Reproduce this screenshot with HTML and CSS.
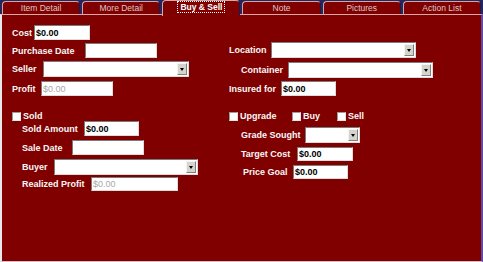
FILE: index.html
```html
<!DOCTYPE html>
<html lang="en">
<head>
  <meta charset="UTF-8" />
  <title>Buy &amp; Sell</title>
  <link rel="stylesheet" href="styles.css">
</head>
<body>
  <div class="window">
    <div class="tabs">
      <div class="tab">Item Detail</div>
      <div class="tab">More Detail</div>
      <div class="tab active"><span>Buy &amp; Sell</span></div>
      <div class="tab">Note</div>
      <div class="tab">Pictures</div>
      <div class="tab">Action List</div>
    </div>

    <div class="panel">
      <div class="col left">
        <div class="row f-cost"><label>Cost</label><input class="txt" value="$0.00"></div>
        <div class="row f-purchase"><label>Purchase Date</label><input class="txt" value=""></div>
        <div class="row f-seller combo-row"><label>Seller</label><div class="combo"><span class="btn"></span></div></div>
        <div class="row f-profit"><label>Profit</label><input class="txt off" value="$0.00" disabled></div>

        <div class="row checks"><div class="check"><span class="box"></span>Sold</div></div>

        <div class="row sub f-amount"><label>Sold Amount</label><input class="txt" value="$0.00"></div>
        <div class="row sub f-saledate"><label>Sale Date</label><input class="txt" value=""></div>
        <div class="row sub f-buyer combo-row"><label>Buyer</label><div class="combo"><span class="btn"></span></div></div>
        <div class="row sub f-realized"><label>Realized Profit</label><input class="txt off" value="$0.00" disabled></div>
      </div>

      <div class="col right">
        <div class="row f-location combo-row"><label>Location</label><div class="combo"><span class="btn"></span></div></div>
        <div class="row f-container combo-row"><label>Container</label><div class="combo"><span class="btn"></span></div></div>
        <div class="row f-insured"><label>Insured for</label><input class="txt" value="$0.00"></div>

        <div class="row checks">
          <div class="check c-upgrade"><span class="box"></span>Upgrade</div>
          <div class="check c-buy"><span class="box"></span>Buy</div>
          <div class="check"><span class="box"></span>Sell</div>
        </div>

        <div class="row f-grade combo-row"><label>Grade Sought</label><div class="combo"><span class="btn"></span></div></div>
        <div class="row f-target"><label>Target Cost</label><input class="txt" value="$0.00"></div>
        <div class="row f-goal"><label>Price Goal</label><input class="txt" value="$0.00"></div>
      </div>
    </div>
  </div>
</body>
</html>
```

FILE: styles.css
```css
body {
  margin: 0;
  background: #800000;
  font-family: "Liberation Sans", Arial, sans-serif;
}

.window {
  width: 483px;
  height: 262px;
  display: flex;
  flex-direction: column;
  background: #26265e;
}

/* tab strip */
.tabs {
  display: grid;
  grid-template-columns: repeat(6, 1fr);
  gap: 2px;
  padding: 0 2px;
  height: 14px;
}

.tab {
  margin-top: 1px;
  height: 13px;
  box-sizing: border-box;
  background: #800000;
  border: 1px solid #d4a8a8;
  border-bottom: none;
  border-right-color: #1c1c50;
  border-radius: 4px 4px 0 0;
  color: #d8c8c8;
  font-size: 8.5px;
  line-height: 12px;
  text-align: center;
  white-space: nowrap;
}

.tab.active {
  position: relative;
  z-index: 1;
  margin-top: 0;
  height: 16px;
  color: #fff;
  font-weight: bold;
  line-height: 13px;
}

.tab.active span {
  outline: 1px dotted #fff;
  padding: 0 2px;
}

/* page body */
.panel {
  flex: 1;
  display: flex;
  background: #800000;
  border-top: 1px solid #d8a8a8;
  border-left: 2px solid #e8e8e8;
  border-right: 2px solid #5c4ca8;
  border-bottom: 1px solid #d0c0d0;
}

.col {
  display: flex;
  flex-direction: column;
  box-sizing: border-box;
}

.col.left {
  width: 227px;
  padding: 10px 0 0 10px;
}

.col.right {
  flex: 1;
  padding-top: 27px;
}

.row {
  display: flex;
  align-items: center;
  height: 15px;
  color: #f8f8f8;
  font-size: 9px;
  font-weight: bold;
}

.row label {
  flex: none;
  white-space: nowrap;
}

.row.sub {
  padding-left: 10px;
}

.combo-row {
  height: 16px;
}

.txt {
  box-sizing: border-box;
  height: 100%;
  margin: 0;
  padding: 0 1px;
  border: 1px solid;
  border-color: #7a7a7a #dcdcdc #dcdcdc #7a7a7a;
  background: #fff;
  color: #000;
  font-family: "Liberation Sans", Arial, sans-serif;
  font-size: 9px;
  font-weight: bold;
}

.txt.off {
  color: #a8a8a8;
  font-weight: normal;
}

.combo {
  box-sizing: border-box;
  height: 100%;
  display: flex;
  justify-content: flex-end;
  padding: 1px;
  background: #fff;
  border: 1px solid;
  border-color: #7a7a7a #dcdcdc #dcdcdc #7a7a7a;
}

.combo .btn {
  width: 10px;
  box-sizing: border-box;
  display: flex;
  align-items: center;
  justify-content: center;
  background: #d4d4cc;
  border: 1px solid;
  border-color: #f4f4f4 #808080 #808080 #f4f4f4;
}

.combo .btn::after {
  content: "";
  border-left: 2px solid transparent;
  border-right: 2px solid transparent;
  border-top: 3px solid #000;
}

.checks {
  height: 10px;
  margin-top: 15px;
}

.check {
  display: flex;
  align-items: center;
  white-space: nowrap;
}

.box {
  width: 9px;
  height: 9px;
  box-sizing: border-box;
  margin-right: 2px;
  background: #fff;
  border: 1px solid;
  border-color: #9a9a9a #e4e4e4 #e4e4e4 #9a9a9a;
}

.c-upgrade { width: 63px; }
.c-buy { width: 45px; }

/* left column fields */
.f-cost label { width: 22px; }
.f-cost .txt { width: 56px; }

.f-purchase { margin-top: 3px; }
.f-purchase label { width: 73px; }
.f-purchase .txt { width: 72px; }

.f-seller { margin-top: 3px; }
.f-seller label { width: 31px; }
.f-seller .combo { width: 146px; }

.f-profit { margin-top: 4px; }
.f-profit label { width: 29px; }
.f-profit .txt { width: 72px; }

.f-amount label { width: 62px; }
.f-amount .txt { width: 55px; }

.f-saledate { margin-top: 4px; }
.f-saledate label { width: 50px; }
.f-saledate .txt { width: 72px; }

.f-buyer { margin-top: 4px; }
.f-buyer label { width: 32px; }
.f-buyer .combo { width: 144px; }

.f-realized { margin-top: 2px; height: 14px; }
.f-realized label { width: 69px; }
.f-realized .txt { width: 87px; }

/* right column fields */
.f-location label { width: 42px; }
.f-location .combo { width: 145px; }

.f-container { margin-top: 4px; padding-left: 12px; }
.f-container label { width: 47px; }
.f-container .combo { width: 145px; }

.f-insured { margin-top: 3px; }
.f-insured label { width: 52px; }
.f-insured .txt { width: 55px; }

.f-grade { margin-top: 6px; padding-left: 12px; }
.f-grade label { width: 64px; }
.f-grade .combo { width: 55px; }

.f-target { margin-top: 4px; padding-left: 12px; height: 14px; }
.f-target label { width: 56px; }
.f-target .txt { width: 56px; }

.f-goal { margin-top: 4px; padding-left: 14px; height: 14px; }
.f-goal label { width: 50px; }
.f-goal .txt { width: 55px; }
```
